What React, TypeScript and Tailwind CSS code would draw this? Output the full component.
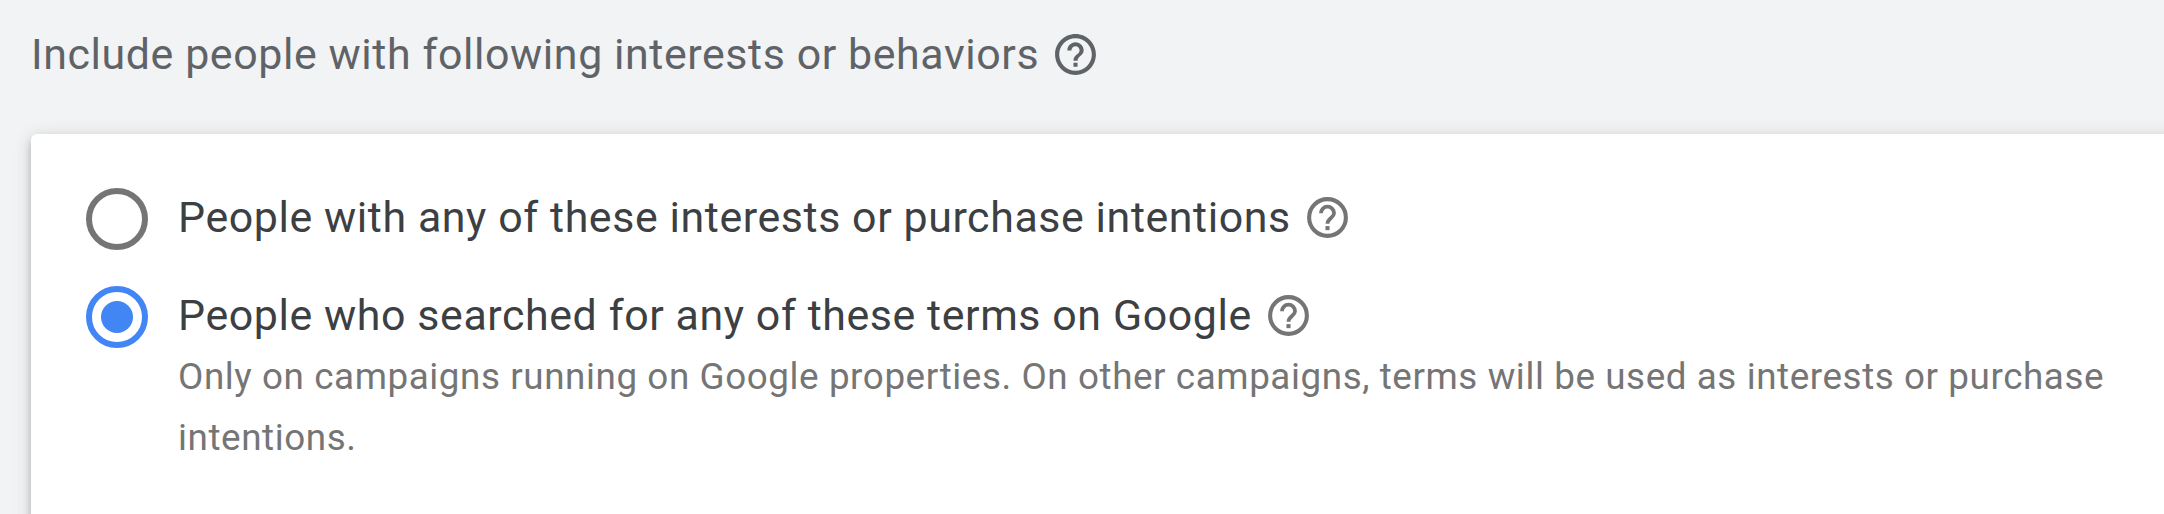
import { MdHelpOutline } from 'react-icons/md'

const options = [
  {
    label: 'People with any of these interests or purchase intentions',
    description: '',
    checked: false,
  },
  {
    label: 'People who searched for any of these terms on Google',
    description:
      'Only on campaigns running on Google properties. On other campaigns, terms will be used as interests or purchase intentions.',
    checked: true,
  },
]

function Radio({ checked }: { checked: boolean }) {
  return (
    <span
      className={`flex h-[62px] w-[62px] shrink-0 items-center justify-center rounded-full border-[6px] ${
        checked ? 'border-[#4285f4]' : 'border-[#757575]'
      }`}
    >
      {checked && <span className="h-8 w-8 rounded-full bg-[#4285f4]" />}
    </span>
  )
}

// Lighter question mark than the one in the section title
function HelpIcon() {
  return (
    <svg viewBox="0 0 24 24" fill="none" stroke="currentColor" className="h-[49px] w-[49px] text-[#757575]">
      <circle cx="12" cy="12" r="9" strokeWidth="2" />
      <path d="M8.8 9.9a3.2 3.2 0 0 1 6.4 0c0 2.3-3.2 2.5-3.2 5.2" strokeWidth="1.85" />
      <path d="M12 16.2v2" strokeWidth="2" />
    </svg>
  )
}

export default function App() {
  return (
    <div className="h-[514px] w-[2164px] overflow-hidden bg-[#f1f3f4] pl-[31px] font-[Roboto,sans-serif]">
      <div className="flex h-[134px] items-center gap-[12px] pb-[25px]">
        <h2 className="whitespace-nowrap text-[42.9px] tracking-[0.59px] text-[#5f6368]">
          Include people with following interests or behaviors
        </h2>
        <MdHelpOutline className="h-[49px] w-[49px] text-[#5f6368]" />
      </div>

      <div className="h-[420px] w-[2200px] rounded-[6px] bg-white pl-[55px] pt-[54px] shadow-[0_5px_7px_0_rgba(0,0,0,0.18),0_3px_18px_0_rgba(0,0,0,0.16)]">
        {options.map((option) => (
          <div key={option.label} className="flex h-[98px] gap-[30px]">
            <Radio checked={option.checked} />
            <div>
              <div className="flex h-[58px] items-center gap-[12px]">
                <span className="whitespace-nowrap text-[42.9px] tracking-[0.59px] text-[#3c4043]">
                  {option.label}
                </span>
                <HelpIcon />
              </div>
              {option.description && (
                <p className="w-[1960px] pt-[2px] text-[36.8px] leading-[61px] tracking-[0.58px] text-[#757575]">
                  {option.description}
                </p>
              )}
            </div>
          </div>
        ))}
      </div>
    </div>
  )
}
